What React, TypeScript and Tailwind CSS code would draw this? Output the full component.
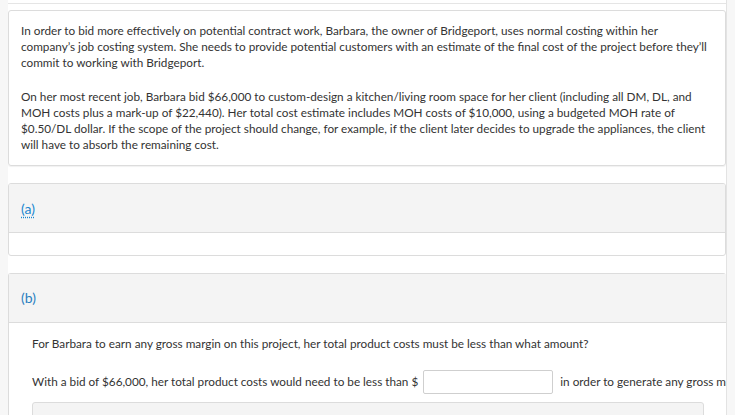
import React from 'react';

export default function App() {
  return (
    <div className="h-[415px] w-[735px] overflow-hidden bg-[#f7f7f7] text-[#333] font-['Lato','Liberation_Sans',sans-serif] text-[11.75px]">
      <div className="ml-[8px] w-[719px] h-full bg-white border-r border-[#e3e3e3] overflow-hidden">
        {/* bottom of the previous card */}
        <div className="h-[4px] border-b border-[#e5e5e5]" />

        <div className="mt-[6px] rounded-[3px] border border-[#dcdcdc] shadow-[0_1px_1px_rgba(0,0,0,0.06)] px-[12px] pt-[12px] pb-[12px] leading-[16px]">
          <p>
            In order to bid more effectively on potential contract work, Barbara, the owner of Bridgeport, uses normal costing within her
            company’s job costing system. She needs to provide potential customers with an estimate of the final cost of the project before they’ll
            commit to working with Bridgeport.
          </p>
          <p className="mt-[18px]">
            On her most recent job, Barbara bid $66,000 to custom-design a kitchen/living room space for her client (including all DM, DL, and
            MOH costs plus a mark-up of $22,440). Her total cost estimate includes MOH costs of $10,000, using a budgeted MOH rate of
            $0.50/DL dollar. If the scope of the project should change, for example, if the client later decides to upgrade the appliances, the client
            will have to absorb the remaining cost.
          </p>
        </div>

        {/* part (a) */}
        <div className="mt-[17px] rounded-[3px] border border-[#dcdcdc] overflow-hidden">
          <div className="h-[49px] bg-[#f4f4f4] border-b border-[#dcdcdc] px-[12px] flex items-center">
            <span className="text-[14px] text-[#1a87d0] underline decoration-dotted underline-offset-[3px]">(a)</span>
          </div>
          <div className="h-[22px]" />
        </div>

        {/* part (b) */}
        <div className="mt-[17px] rounded-[3px] border border-[#dcdcdc] border-r-0">
          <div className="h-[49px] bg-[#f4f4f4] border-b border-[#dcdcdc] px-[12px] flex items-center pb-[1px]">
            <span className="text-[14px] text-[#2a7fc0]">(b)</span>
          </div>
          <div className="px-[23px] pt-[13px]">
            <p className="leading-[16px]">
              For Barbara to earn any gross margin on this project, her total product costs must be less than what amount?
            </p>
            <div className="mt-[18px] flex items-center whitespace-nowrap">
              <span>With a bid of $66,000, her total product costs would need to be less than $</span>
              <input
                type="text"
                className="ml-[5px] w-[130px] h-[24px] border border-[#cfcfcf] rounded-[2px] bg-white outline-none"
              />
              <span className="ml-[7px]">in order to generate any gross margin on this project.</span>
            </div>
            <div className="mt-[8px] w-[672px] rounded-[3px] border border-[#dcdcdc] bg-[#f4f4f4] px-[18px] pt-[9px] pb-[10px]">
              <span className="text-[14px]">Textbook and Media</span>
            </div>
          </div>
        </div>
      </div>
    </div>
  );
}
